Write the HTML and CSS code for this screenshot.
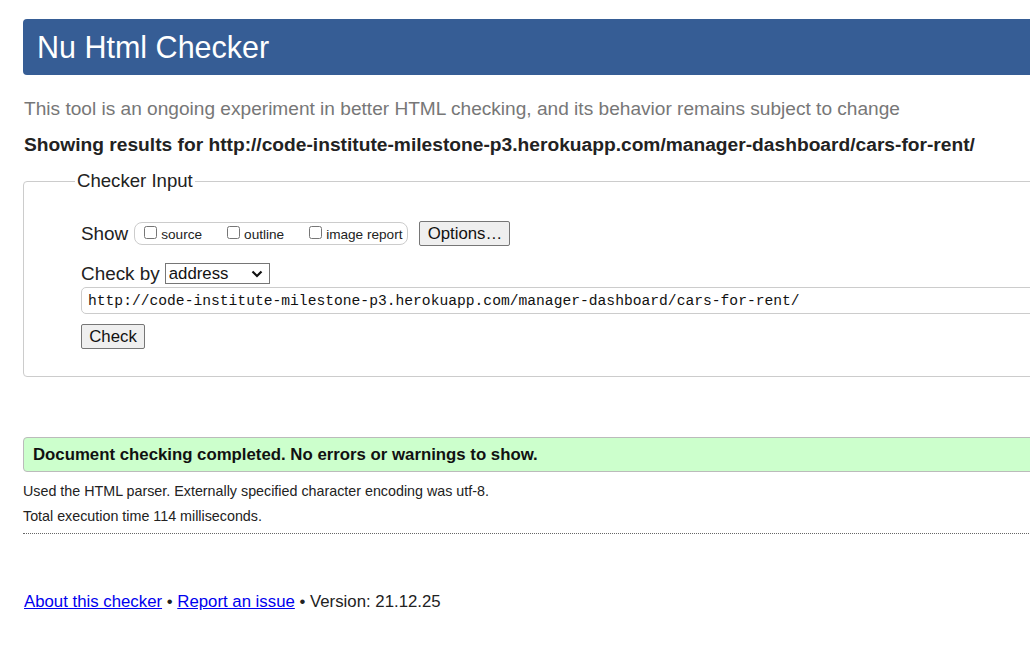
FILE: index.html
```html
<!DOCTYPE html>
<html lang="en">
<head>
<meta charset="utf-8">
<title>Nu Html Checker</title>
<link rel="stylesheet" href="styles.css">
</head>
<body>
<div class="page">
  <h1 class="banner">Nu Html Checker</h1>
  <p class="intro">This tool is an ongoing experiment in better HTML checking, and its behavior remains subject to change</p>
  <p class="showing">Showing results for http://code-institute-milestone-p3.herokuapp.com/manager-dashboard/cars-for-rent/</p>
  <fieldset class="input-box">
    <legend class="legend">Checker Input</legend>
    <div class="row show-row">
      <span class="row-label">Show</span>
      <span class="opts">
        <label class="opt"><input type="checkbox" class="cb"><span>source</span></label>
        <label class="opt"><input type="checkbox" class="cb"><span>outline</span></label>
        <label class="opt"><input type="checkbox" class="cb"><span>image report</span></label>
      </span>
      <button type="button" class="btn btn-options">Options…</button>
    </div>
    <div class="row by-row">
      <span class="row-label">Check by</span>
      <span class="select-wrap">
        <select class="select"><option>address</option></select>
        <svg class="chev" width="12" height="8" viewBox="0 0 12 8"><path d="M1.5 1.5 L6 6 L10.5 1.5" fill="none" stroke="#111" stroke-width="2.2"/></svg>
      </span>
    </div>
    <input class="url" type="text" value="http://code-institute-milestone-p3.herokuapp.com/manager-dashboard/cars-for-rent/">
    <div class="submit-row"><button type="button" class="btn btn-check">Check</button></div>
  </fieldset>
  <p class="success">Document checking completed. No errors or warnings to show.</p>
  <p class="details first">Used the HTML parser. Externally specified character encoding was utf-8.</p>
  <p class="details">Total execution time 114 milliseconds.</p>
  <hr class="rule">
  <p class="footer"><a href="#">About this checker</a> • <a href="#">Report an issue</a> • Version: 21.12.25</p>
</div>
</body>
</html>
```
FILE: styles.css
```css
html, body {
  margin: 0;
  padding: 0;
  overflow: hidden;
  background: #fff;
}
body {
  font-family: "Liberation Sans", Arial, sans-serif;
  color: #222;
}
.page {
  width: 1100px;
  padding: 19px 0 0 23px;
}
.banner {
  margin: 0;
  height: 56px;
  line-height: 56px;
  padding-left: 14px;
  background: #365d95;
  color: #fff;
  font-size: 30.5px;
  font-weight: normal;
  border-radius: 4px;
}
.intro {
  margin: 23px 0 0 1px;
  font-size: 19.1px;
  line-height: 22px;
  color: #777;
}
.showing {
  margin: 14px 0 0 1px;
  font-size: 19.2px;
  line-height: 22px;
  font-weight: bold;
  color: #222;
}
.input-box {
  margin: 14px 0 0 0;
  padding: 29px 0 27px 57px;
  border: 1px solid #ccc;
  border-radius: 4px;
  min-width: 0;
}
.legend {
  margin-left: -6px;
  padding: 0 2px;
  font-size: 18.6px;
  line-height: 22px;
  color: #222;
}
.row {
  display: flex;
  align-items: center;
}
.row-label {
  font-size: 18.9px;
  line-height: 22px;
}
.show-row {
  height: 25px;
}
.opts {
  display: inline-flex;
  align-items: center;
  height: 21px;
  margin-left: 6px;
  padding: 0 5px 0 8px;
  border: 1px solid #ccc;
  border-radius: 8px;
}
.opt {
  display: inline-flex;
  align-items: center;
  font-size: 13.6px;
  margin-right: 24px;
}
.opt:last-child {
  margin-right: 0;
}
.cb {
  width: 13px;
  height: 13px;
  margin: 0 4px 3px 1px;
}
.opt span {
  padding-top: 2px;
}
.btn {
  font-family: "Liberation Sans", Arial, sans-serif;
  font-size: 16.8px;
  color: #111;
  background: #efefef;
  border: 1px solid #767676;
  border-radius: 2px;
  height: 25px;
  padding: 0 6px;
}
.btn-options {
  margin-left: 11px;
  width: 91px;
}
.by-row {
  margin-top: 17px;
  height: 21px;
}
.select-wrap {
  position: relative;
  display: inline-block;
  margin-left: 5px;
}
.select {
  -webkit-appearance: none;
  appearance: none;
  display: block;
  width: 105px;
  height: 21px;
  padding: 0 0 0 3px;
  font-family: "Liberation Sans", Arial, sans-serif;
  font-size: 16.8px;
  color: #111;
  background: #fff;
  border: 1px solid #767676;
  border-radius: 0;
}
.chev {
  position: absolute;
  right: 7px;
  top: 7px;
  pointer-events: none;
}
.url {
  display: block;
  box-sizing: border-box;
  width: 100%;
  height: 27px;
  margin-top: 3px;
  padding: 0 6px;
  font-family: "Liberation Mono", "DejaVu Sans Mono", monospace;
  font-size: 14.65px;
  color: #111;
  border: 1px solid #ccc;
  border-radius: 5px;
}
.submit-row {
  margin-top: 10px;
}
.btn-check {
  width: 64px;
}
.success {
  margin: 60px 0 0 0;
  padding: 8px 9px;
  line-height: 17px;
  font-size: 16.8px;
  font-weight: bold;
  color: #111;
  background: #ccffcc;
  border: 1px solid #bbb;
  border-radius: 4px;
}
.details {
  margin: 0;
  padding-top: 9px;
  font-size: 14.3px;
  line-height: 16px;
  color: #222;
}
.details.first {
  padding-top: 11px;
}
.rule {
  margin: 9px 0 0 0;
  border: 0;
  border-top: 1px dotted #666;
  height: 0;
}
.footer {
  margin: 58px 0 0 1px;
  font-size: 16.8px;
  line-height: 20px;
  color: #222;
}
.footer a {
  color: #0000ee;
}
```
